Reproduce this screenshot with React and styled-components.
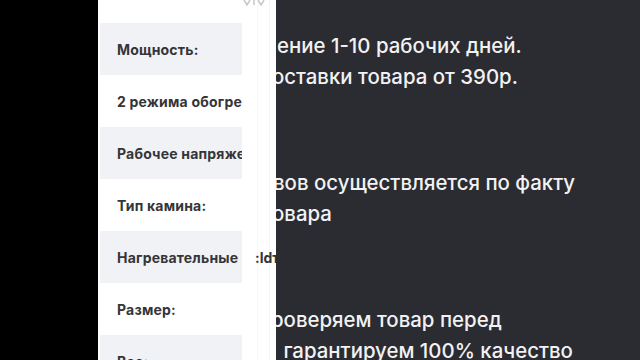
import React from "react";
import styled, { createGlobalStyle } from "styled-components";

const Global = createGlobalStyle`
  html, body { margin: 0; padding: 0; background: #000; }
  #root { width: 640px; height: 360px; }
`;

const Frame = styled.div`
  width: 640px;
  height: 360px;
  display: flex;
  overflow: hidden;
  background: #000;
`;

const BlackStrip = styled.div`
  width: 98px;
  flex: none;
  background: #000;
`;

const Panel = styled.div`
  width: 178px;
  flex: none;
  background: #fff;
  display: flex;
  padding-left: 2px;
  box-sizing: border-box;
`;

const SpecColumn = styled.div`
  width: 142px;
  flex: none;
  display: flex;
  flex-direction: column;
  padding-top: 23px;
`;

const SpecRow = styled.div`
  height: 52px;
  flex: none;
  display: flex;
  align-items: center;
  padding-left: 17px;
  background: ${(p) => (p.$shaded ? "#f1f2f5" : "#fff")};
  overflow: hidden;
  white-space: nowrap;
  font-family: Inter, "Noto Sans", sans-serif;
  font-weight: 700;
  font-size: 14px;
  letter-spacing: 0.2px;
  color: #353539;
`;

const SideColumn = styled.div`
  flex: 1;
  display: flex;
  flex-direction: column;
  padding-left: 13px;
  overflow: hidden;
  background: linear-gradient(
    to right,
    transparent 15px,
    #f7f7f8 15px,
    #f7f7f8 16px,
    transparent 16px,
    transparent 27px,
    #f4f4f6 27px,
    #f4f4f6 28px,
    transparent 28px
  );
`;

const TopIcon = styled.div`
  height: 23px;
  flex: none;
  display: flex;
  align-items: flex-start;
  margin-left: -12px;
`;

const SideCell = styled.div`
  height: 52px;
  flex: none;
  display: flex;
  align-items: center;
  white-space: nowrap;
  font-family: Inter, "Noto Sans", sans-serif;
  font-weight: 700;
  font-size: 14px;
  color: #353539;
`;

const Dark = styled.div`
  flex: 1;
  background: #2b2c32;
  overflow: hidden;
  padding-top: 30px;
  font-family: Inter, "Noto Sans", sans-serif;
  font-weight: 500;
  font-size: 20.4px;
  color: #f2f2f4;
  display: flex;
  flex-direction: column;
  gap: 75px;
`;

const Paragraph = styled.div`
  display: flex;
  flex-direction: column;
`;

const Line = styled.div`
  height: 31px;
  line-height: 31px;
  white-space: nowrap;
  margin-left: ${(p) => p.$shift || 0}px;
`;

const specs = [
  "Мощность:",
  "2 режима обогрева:",
  "Рабочее напряжение:",
  "Тип камина:",
  "Нагревательные",
  "Размер:",
  "Вес:",
];

const paragraphs = [
  [
    { text: "ение 1-10 рабочих дней.", shift: 1 },
    { text: "оставки товара от 390р.", shift: -4 },
  ],
  [
    { text: "вов осуществляется по факту", shift: -3 },
    { text: "овара", shift: -4 },
  ],
  [
    { text: "роверяем товар перед", shift: -5 },
    { text: "\u00a0гарантируем 100% качество", shift: 2 },
  ],
];

export default function App() {
  return (
    <>
      <Global />
      <Frame>
        <BlackStrip />
        <Panel>
          <SpecColumn>
            {specs.map((s, i) => (
              <SpecRow key={s} $shaded={i % 2 === 0}>
                {s}
              </SpecRow>
            ))}
          </SpecColumn>
          <SideColumn>
            <TopIcon>
              <svg width="22" height="6" viewBox="0 0 22 6">
                <path d="M1 0 L4 5 L7 0" stroke="#c9cacf" strokeWidth="1.6" fill="none" />
                <path d="M11 0 V5 M15 0 L18 5 L21 0" stroke="#c9cacf" strokeWidth="1.6" fill="none" />
              </svg>
            </TopIcon>
            <SideCell />
            <SideCell />
            <SideCell />
            <SideCell />
            <SideCell>:ldт</SideCell>
          </SideColumn>
        </Panel>
        <Dark>
          {paragraphs.map((p, i) => (
            <Paragraph key={i}>
              {p.map((l) => (
                <Line key={l.text} $shift={l.shift}>
                  {l.text}
                </Line>
              ))}
            </Paragraph>
          ))}
        </Dark>
      </Frame>
    </>
  );
}
